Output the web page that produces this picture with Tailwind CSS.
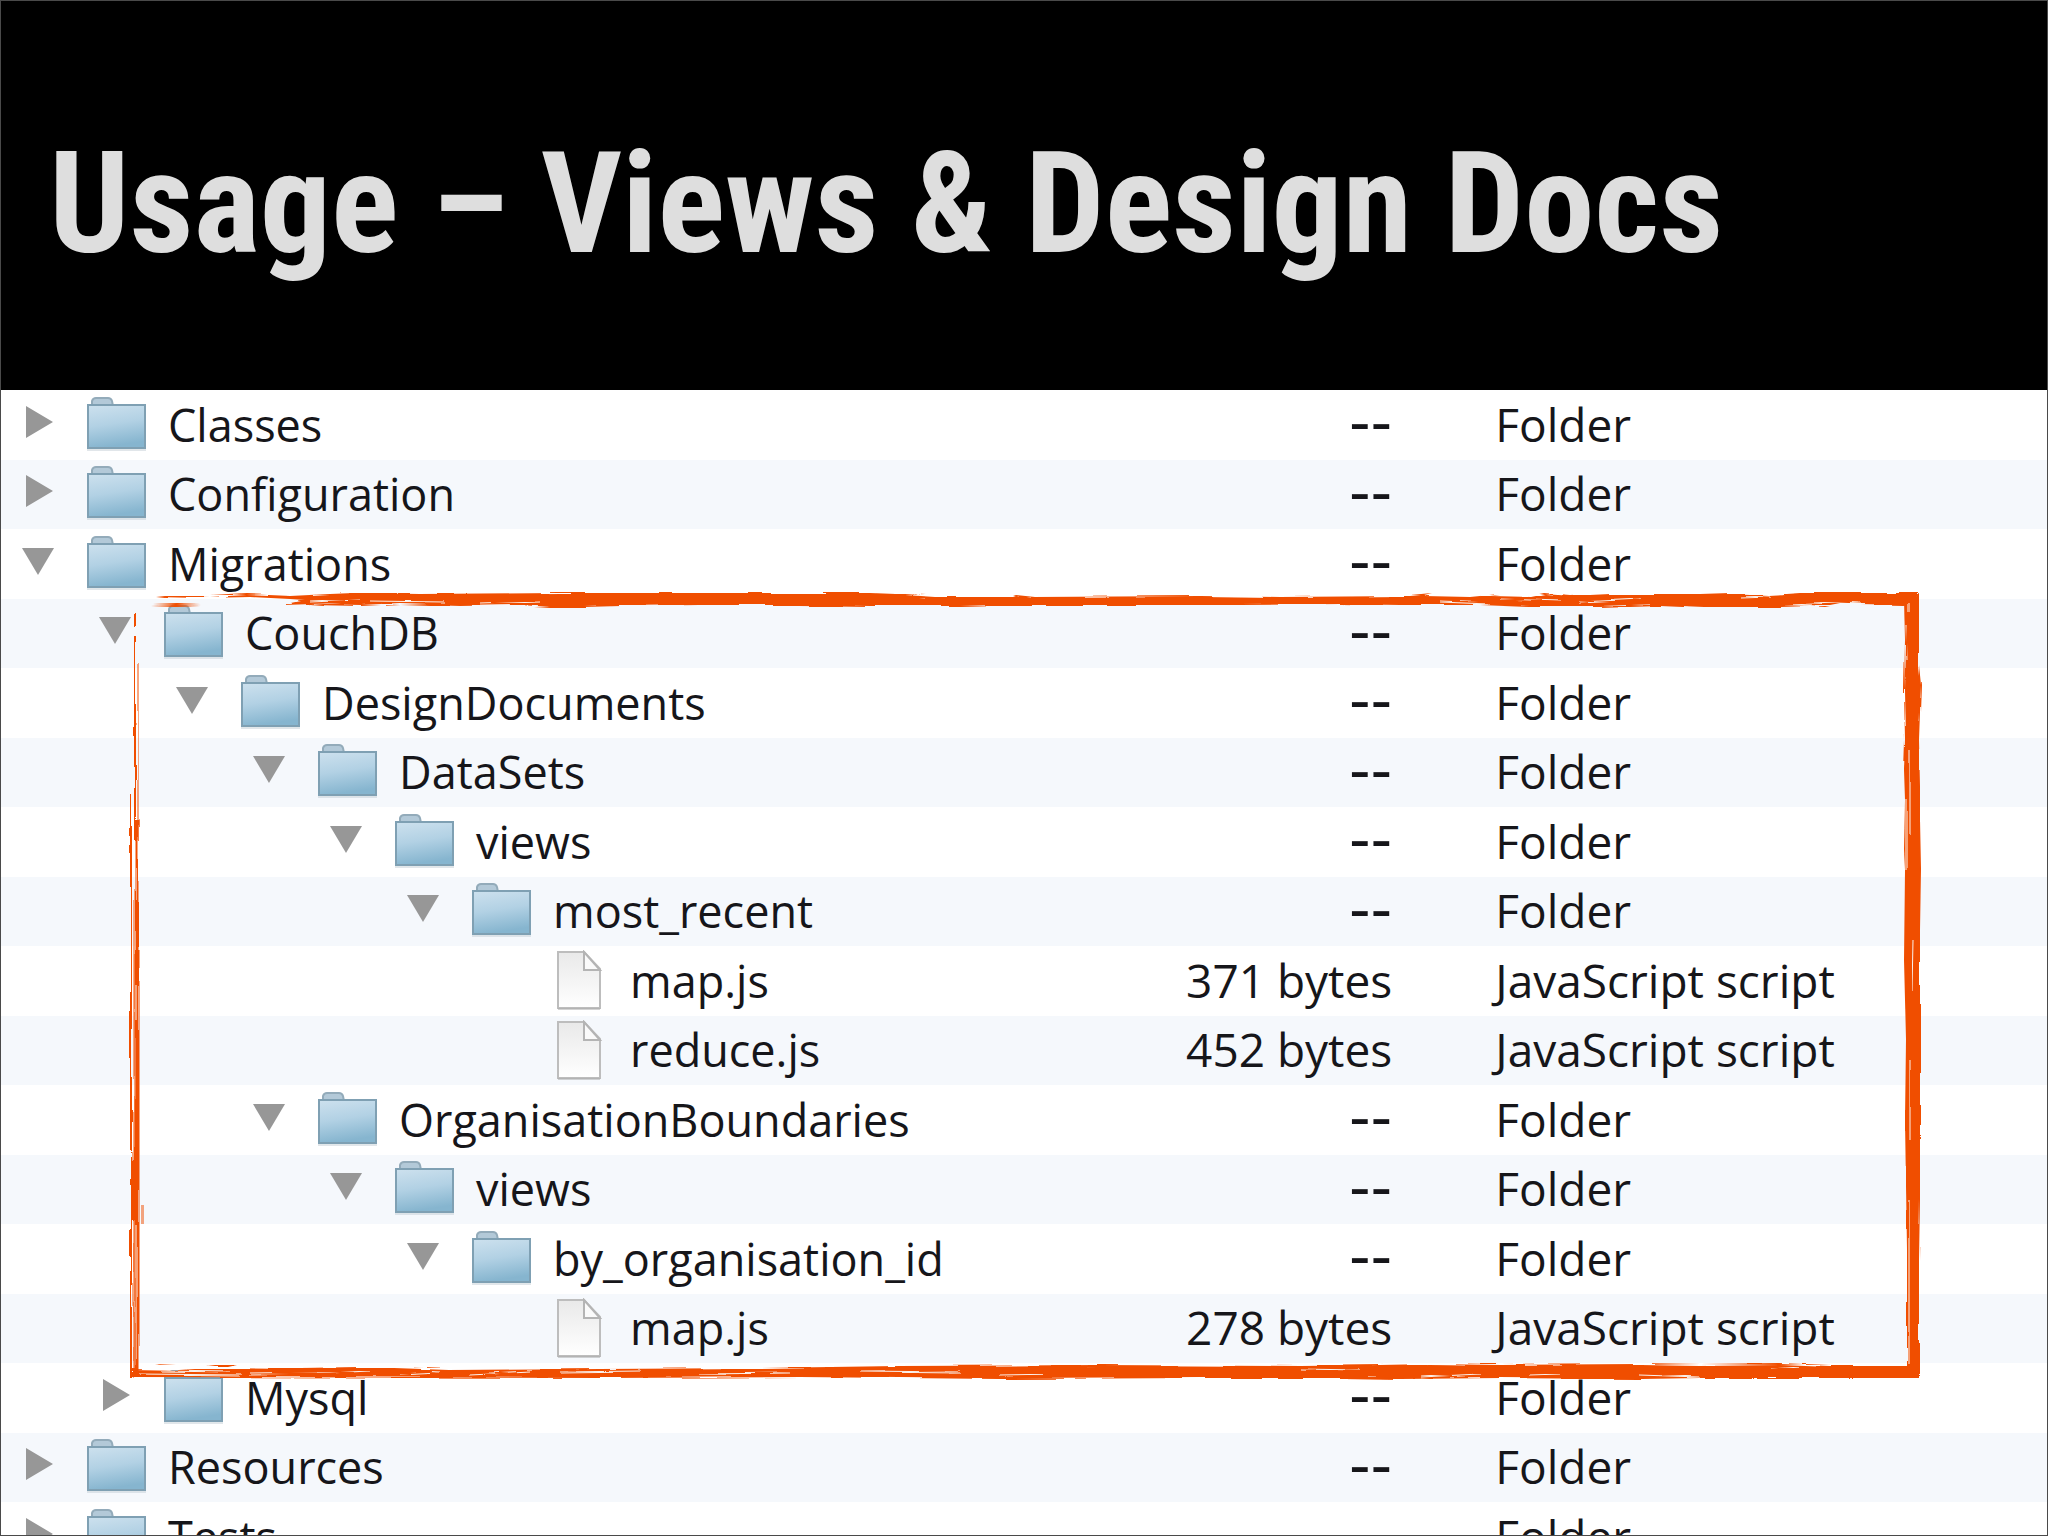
<!DOCTYPE html>
<html lang="en">

<head>
    <meta charset="UTF-8">
    <meta name="viewport" content="width=device-width, initial-scale=1.0">
    <title>Usage – Views &amp; Design Docs</title>
    <script src="https://cdn.jsdelivr.net/npm/@tailwindcss/browser@4"></script>
</head>

<body class="bg-black">
    <!-- shared fills -->
    <svg class="absolute w-0 h-0" aria-hidden="true">
        <defs>
            <linearGradient id="folderFill" x1="0" y1="0" x2="0.2" y2="1">
                <stop offset="0" stop-color="#cde1ee" />
                <stop offset="0.5" stop-color="#b2d1e4" />
                <stop offset="1" stop-color="#86b5cf" />
            </linearGradient>
            <linearGradient id="docFill" x1="0" y1="0" x2="0" y2="1">
                <stop offset="0" stop-color="#e9e9e9" />
                <stop offset="1" stop-color="#ffffff" />
            </linearGradient>
            <filter id="roughX" filterUnits="userSpaceOnUse" x="110" y="570" width="1840" height="830" color-interpolation-filters="sRGB">
                <feTurbulence type="fractalNoise" baseFrequency="0.015 0.4" numOctaves="3" seed="4" />
                <feDisplacementMap in="SourceGraphic" scale="5" xChannelSelector="R" yChannelSelector="G" />
            </filter>
            <filter id="roughY" filterUnits="userSpaceOnUse" x="110" y="570" width="1840" height="830" color-interpolation-filters="sRGB">
                <feTurbulence type="fractalNoise" baseFrequency="0.4 0.015" numOctaves="3" seed="9" />
                <feDisplacementMap in="SourceGraphic" scale="4" xChannelSelector="R" yChannelSelector="G" />
            </filter>
        </defs>
    </svg>

    <main class="h-screen flex flex-col overflow-hidden border border-[#4a4a4a] bg-white">
        <header class="shrink-0 h-[389px] bg-black px-[48px] pt-[108px]">
            <h1 class="font-['Roboto_Condensed','Liberation_Sans_Narrow',sans-serif] font-bold text-[141px] leading-[190px] text-[#dedede] whitespace-nowrap">Usage – Views &amp; Design Docs</h1>
        </header>

        <section class="relative">
            <table class="w-full table-fixed border-collapse font-['Open_Sans',sans-serif] text-[46px] leading-[60px] text-[#16161a]">
                <colgroup>
                    <col class="w-[54%]">
                    <col>
                    <col class="w-[32%]">
                </colgroup>
                <tbody id="fileList"></tbody>
            </table>

            <!-- brush frame round the CouchDB folder -->
            <svg class="absolute top-[195px] left-[119px] w-[calc(100%-235px)] h-[800px]" viewBox="120 585 1811 800" preserveAspectRatio="none" fill="#f04e00" aria-hidden="true">
                <!-- top -->
                <g filter="url(#roughX)">
                    <path d="M157 597 L175 595 L210 596 L246 594 L290 596 L330 594 L355 593 L420 594 L560 593 L870 593 L895 594 L926 594 L905 595 L935 597 L1010 597 L1016 595 L1035 597 L1200 596 L1280 597 L1410 596 L1432 594 L1424 596 L1470 597 L1500 594 L1490 596 L1530 597 L1545 594 L1570 596 L1610 594 L1700 594 L1730 593 L1770 595 L1800 593 L1917 593 L1917 604 L1904 605 L1860 604 L1840 604 L1825 607 L1810 606 L1780 607 L1705 607 L1660 605 L1600 607 L1530 607 L1480 605 L1400 605 L1340 604 L1240 605 L1100 605 L1000 605 L960 606 L870 606 L800 605 L700 605 L620 606 L585 607 L550 607 L520 605 L460 606 L400 604 L360 606 L310 605 L340 603 L281 605 L305 600 L290 599 L250 597 L200 598 Z" />
                    <path d="M152 605 L176 604 L201 605 L176 606 Z" />
                    <path fill="none" stroke="#fbf3ee" d="M310 602 L360 600 M370 601 L445 602 M480 604 L540 602 M1440 602 L1490 604 M1500 599 L1560 601 M1580 602 L1640 599 M1740 598 L1770 597 M1790 605 L1860 602" />
                </g>
                <!-- bottom -->
                <g filter="url(#roughX)">
                    <path d="M132 1369 L180 1370 L210 1368 L300 1369 L360 1368 L395 1368 L450 1370 L600 1369 L760 1368 L900 1366 L1100 1365 L1300 1366 L1380 1365 L1430 1364 L1500 1365 L1640 1364 L1700 1365 L1780 1364 L1830 1366 L1918 1366 L1918 1378 L1700 1378 L1640 1379 L1500 1378 L1400 1379 L1340 1378 L1200 1378 L1000 1379 L800 1377 L600 1378 L132 1377 Z" />
                    <path d="M206 1366 L222 1364 L237 1364 L228 1366 Z" />
                    <path d="M154 1365 L176 1366 L160 1366 Z" />
                    <path fill="none" stroke="#fbf3ee" d="M140 1374 L240 1375 M160 1371 L230 1372 M250 1374 L330 1373 L370 1371 M400 1374 L440 1372 M470 1375 L530 1372 M560 1372 L640 1371 M700 1374 L790 1373 M860 1371 L960 1372 M1000 1375 L1060 1374 M1300 1369 L1360 1370 M1420 1377 L1480 1374 M1530 1375 L1560 1374 M1640 1375 L1700 1377 M1770 1369 L1800 1367" />
                </g>
                <!-- right -->
                <g filter="url(#roughY)">
                    <path d="M1904 600 L1919 594 L1919 665 L1921 685 L1919 740 L1920 785 L1920 820 L1921 870 L1920 930 L1920 1010 L1920 1100 L1920 1200 L1919 1260 L1919 1377 L1907 1377 L1907 1250 L1905 1120 L1906 1040 L1904 960 L1905 870 L1904 850 L1905 800 L1904 770 L1905 740 L1904 690 L1905 640 Z" />
                    <path fill="none" stroke="#fbf3ee" d="M1909 603 L1909 612 M1906 625 L1907 660 M1910 750 L1910 835 M1906 800 L1906 870 M1913 940 L1912 990 M1910 1060 L1910 1140 M1909 1200 L1909 1364" />
                </g>
                <!-- left, loose bristles that join towards the bottom -->
                <g filter="url(#roughY)" fill="none" stroke="#f04e00">
                    <path d="M135 614 V626 M135 636 V840" stroke-width="2" />
                    <path d="M138 664 V840" />
                    <path d="M131 794 V1377" stroke-width="2" />
                    <path d="M134 900 V1377" />
                    <path d="M137 820 V960" stroke-width="3" />
                    <path d="M137 950 V1377" stroke-width="5" />
                    <path d="M133 1160 V1220" stroke-width="4" />
                    <path d="M142 1205 V1225" />
                    <path d="M136 985 V1020 M136 1225 V1360" stroke="#fbf3ee" />
                </g>
            </svg>
        </section>
    </main>

    <!-- cell contents, copied for each row below -->
    <template id="iconClosed">
        <button aria-label="Expand" class="w-[32px] h-[32px] mb-[7px]"><svg viewBox="0 0 32 32" class="w-full h-full"><path d="M4 0 L31 16 L4 32 Z" fill="#979797" /></svg></button>
    </template>
    <template id="iconOpen">
        <button aria-label="Collapse" class="w-[32px] h-[32px] mb-[7px]"><svg viewBox="0 0 32 32" class="w-full h-full"><path d="M0 3 L32 3 L16 30 Z" fill="#979797" /></svg></button>
    </template>
    <template id="iconFolder">
        <svg viewBox="0 0 60 54" class="w-[60px] h-[54px] mb-[3px]">
            <path d="M5 9 L5 4 Q6 1 9 1 L21 1 Q24 1 25 4 L26 9 Z" fill="#b3c9d8" stroke="#93abba" stroke-width="2" />
            <path d="M1 8 H58 V51 H1 Z" fill="url(#folderFill)" stroke="#7fa0b3" stroke-width="2" />
            <path d="M0 53 H59" stroke="#c3ced5" stroke-width="1" />
        </svg>
    </template>
    <template id="iconFile">
        <svg viewBox="0 0 60 60" class="w-[60px] h-[60px] mb-[2px]">
            <path d="M9 2 H35 L51 19 V58 H9 Z" fill="url(#docFill)" stroke="#bdbdbd" stroke-width="2" />
            <path d="M35 2 L51 20 H35 Z" fill="#fafafa" stroke="#b4b4b4" stroke-width="2" />
            <path d="M9 59 H51" stroke="#a8a8a8" stroke-width="1" />
        </svg>
    </template>
    <template id="noSize">
        <span class="font-['DejaVu_Sans',sans-serif] text-[60px] leading-none">--</span>
    </template>

    <script>
        // name, depth, state (open / closed / file), size
        const rows = [
            ["Classes", 0, "closed"],
            ["Configuration", 0, "closed"],
            ["Migrations", 0, "open"],
            ["CouchDB", 1, "open"],
            ["DesignDocuments", 2, "open"],
            ["DataSets", 3, "open"],
            ["views", 4, "open"],
            ["most_recent", 5, "open"],
            ["map.js", 6, "file", "371 bytes"],
            ["reduce.js", 6, "file", "452 bytes"],
            ["OrganisationBoundaries", 3, "open"],
            ["views", 4, "open"],
            ["by_organisation_id", 5, "open"],
            ["map.js", 6, "file", "278 bytes"],
            ["Mysql", 1, "closed"],
            ["Resources", 0, "closed"],
            ["Tests", 0, "closed"]
        ];
        const html = id => document.getElementById(id).innerHTML.trim();
        const toggles = { open: html("iconOpen"), closed: html("iconClosed"), file: '<span class="w-[32px]"></span>' };

        document.getElementById("fileList").innerHTML = rows.map(([name, depth, state, size]) => `
            <tr class="h-[70px] even:h-[69px] even:bg-[#f5f8fc]">
                <td class="p-0">
                    <div class="flex items-center h-[69px] text-[45px] whitespace-nowrap" style="padding-left: ${21 + depth * 77}px">
                        ${toggles[state]}
                        <span class="ml-[33px] mr-[21px] shrink-0 flex">${html(state === "file" ? "iconFile" : "iconFolder")}</span>
                        <span class="pb-px">${name}</span>
                    </div>
                </td>
                <td class="p-0 pb-[3px] text-right whitespace-nowrap">${size || html("noSize")}</td>
                <td class="p-0 pb-[3px] pl-[103px] whitespace-nowrap">${state === "file" ? "JavaScript script" : "Folder"}</td>
            </tr>`).join("");
    </script>
</body>

</html>
